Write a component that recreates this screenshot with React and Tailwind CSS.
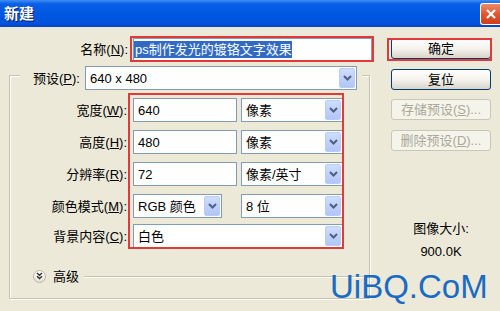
import React from 'react';

const font = "font-['Liberation_Sans','Noto_Sans_CJK_SC',sans-serif]";

function Arrow() {
  return (
    <div className="w-[16px] h-full rounded-[2px] bg-gradient-to-b from-[#cfdcfd] to-[#b0c6f6] border border-[#bccdf5] flex items-center justify-center shrink-0">
      <svg width="9" height="6" viewBox="0 0 9 6">
        <path d="M1 1 L4.5 4.5 L8 1" stroke="#4d6185" strokeWidth="2" fill="none" />
      </svg>
    </div>
  );
}

function Select({ value, className = '' }) {
  return (
    <div className={`h-[24px] bg-white border border-[#7f9db9] flex items-center pl-[4px] p-[1px] ${className}`}>
      <span className="flex-1 text-[13px] text-black leading-none">{value}</span>
      <Arrow />
    </div>
  );
}

function Input({ value, className = '' }) {
  return (
    <div className={`h-[24px] bg-white border border-[#7f9db9] flex items-center pl-[4px] ${className}`}>
      <span className="text-[13px] text-black leading-none">{value}</span>
    </div>
  );
}

function Label({ children }) {
  return (
    <div className="w-[118px] text-right text-[13px] text-black pr-[1px] leading-none">{children}</div>
  );
}

function XpButton({ children, disabled }) {
  return (
    <div
      className={`h-[21px] w-[100px] rounded-[3px] flex items-center justify-center text-[13px] leading-none ${
        disabled
          ? 'border border-[#c9c7ba] bg-[#f5f4ea] text-[#aca899]'
          : 'border border-[#003c74] bg-gradient-to-b from-white via-[#f4f3ee] to-[#d8d5c8] text-black'
      }`}
    >
      {children}
    </div>
  );
}

export default function App() {
  return (
    <div className={`w-[500px] h-[311px] bg-[#ece9d8] overflow-hidden relative ${font}`}>
      {/* Title bar */}
      <div className="h-[27px] bg-[linear-gradient(to_bottom,#3f8ff5_0%,#0a5fe6_14%,#0058e2_50%,#0052dc_85%,#0045c8_100%)] flex items-center justify-between pl-[4px] pr-[0px]">
        <span className="text-white font-bold text-[15px] leading-none [text-shadow:1px_1px_0_#0a1e6a]">新建</span>
        <div className="w-[20px] h-[22px] mt-[1px] rounded-l-[3px] border border-r-0 border-white bg-gradient-to-b from-[#ec8a6b] via-[#e0562f] to-[#c8401c] flex items-center justify-center">
          <svg width="12" height="12" viewBox="0 0 12 12">
            <path d="M2 2 L10 10 M10 2 L2 10" stroke="white" strokeWidth="2.2" />
          </svg>
        </div>
      </div>

      <div className="flex pt-[11px]">
        {/* Left column */}
        <div className="w-[373px]">
          <div className="flex items-center h-[23px]">
            <div className="w-[128px] text-right text-[13px] text-black leading-none">名称(<u>N</u>):</div>
            <div className="ml-[5px] w-[239px] h-[23px] bg-white border border-[#7f9db9] flex items-center pl-[1px] overflow-hidden">
              <span className="bg-[#316ac5] text-white text-[13px] leading-[17px] whitespace-nowrap -ml-[4px] pl-[4px]">ps制作发光的镀铬文字效果</span>
            </div>
          </div>

          <div className="mt-[14px] ml-[9px] w-[361px] border border-[#c5c2b2] shadow-[inset_1px_1px_0_white,1px_1px_0_white] pb-[15px]">
            {/* preset legend row */}
            <div className="-mt-[10px] ml-[10px] w-[342px] bg-[#ece9d8] flex items-center pl-[13px] pr-[5px]">
              <div className="w-[47px] text-[13px] text-black leading-none">预设(<u>P</u>):</div>
              <Select value="640 x 480" className="ml-[5px] w-[272px]" />
            </div>

            <div className="mt-[8px] flex items-center">
              <Label>宽度(<u>W</u>):</Label>
              <Input value="640" className="ml-[5px] w-[104px]" />
              <Select value="像素" className="ml-[4px] w-[102px]" />
            </div>
            <div className="mt-[8px] flex items-center">
              <Label>高度(<u>H</u>):</Label>
              <Input value="480" className="ml-[5px] w-[104px]" />
              <Select value="像素" className="ml-[4px] w-[102px]" />
            </div>
            <div className="mt-[8px] flex items-center">
              <Label>分辨率(<u>R</u>):</Label>
              <Input value="72" className="ml-[5px] w-[104px]" />
              <Select value="像素/英寸" className="ml-[4px] w-[102px]" />
            </div>
            <div className="mt-[8px] flex items-center">
              <Label>颜色模式(<u>M</u>):</Label>
              <Select value="RGB 颜色" className="ml-[5px] w-[89px]" />
              <Select value="8 位" className="ml-[19px] w-[102px]" />
            </div>
            <div className="mt-[6px] flex items-center">
              <Label>背景内容(<u>C</u>):</Label>
              <Select value="白色" className="ml-[5px] w-[210px]" />
            </div>

            <div className="mt-[21px] h-[14px] flex items-center pl-[23px] pr-[6px]">
              <div className="w-[13px] h-[13px] rounded-full border border-[#b7b4a4] bg-gradient-to-b from-white to-[#e4e1d6] flex items-center justify-center">
                <svg width="7" height="8" viewBox="0 0 7 8">
                  <path d="M1 1 L3.5 3.3 L6 1 M1 4.2 L3.5 6.5 L6 4.2" stroke="#333" strokeWidth="1.4" fill="none" />
                </svg>
              </div>
              <span className="ml-[7px] text-[13px] text-black leading-none">高级</span>
              <div className="flex-1 ml-[5px] border-t border-[#c5c2b2] shadow-[0_1px_0_white]" />
            </div>
          </div>
        </div>

        {/* Right column */}
        <div className="ml-[18px] w-[100px] flex flex-col">
          <XpButton>确定</XpButton>
          <div className="mt-[10px]"><XpButton>复位</XpButton></div>
          <div className="mt-[9px]"><XpButton disabled>存储预设(<u>S</u>)...</XpButton></div>
          <div className="mt-[10px]"><XpButton disabled>删除预设(<u>D</u>)...</XpButton></div>
          <div className="mt-[70px] text-center text-[13px] text-black leading-[16px]">图像大小:</div>
          <div className="mt-[7px] text-center text-[13px] text-black leading-[16px]">900.0K</div>
        </div>
      </div>

      {/* red annotation boxes */}
      <div className="absolute left-[130px] top-[36px] w-[244px] h-[26px] border-2 border-[#e03a3a]" />
      <div className="absolute left-[387px] top-[38px] w-[105px] h-[23px] border-2 border-[#e03a3a]" />
      <div className="absolute left-[128px] top-[93px] w-[216px] h-[156px] border-2 border-[#e03a3a]" />

      {/* watermark */}
      <div className="absolute left-[330px] top-[270px] text-[33px] leading-none text-[#1a6bc5] font-['Liberation_Sans',sans-serif]">UiBQ.CoM</div>
    </div>
  );
}
